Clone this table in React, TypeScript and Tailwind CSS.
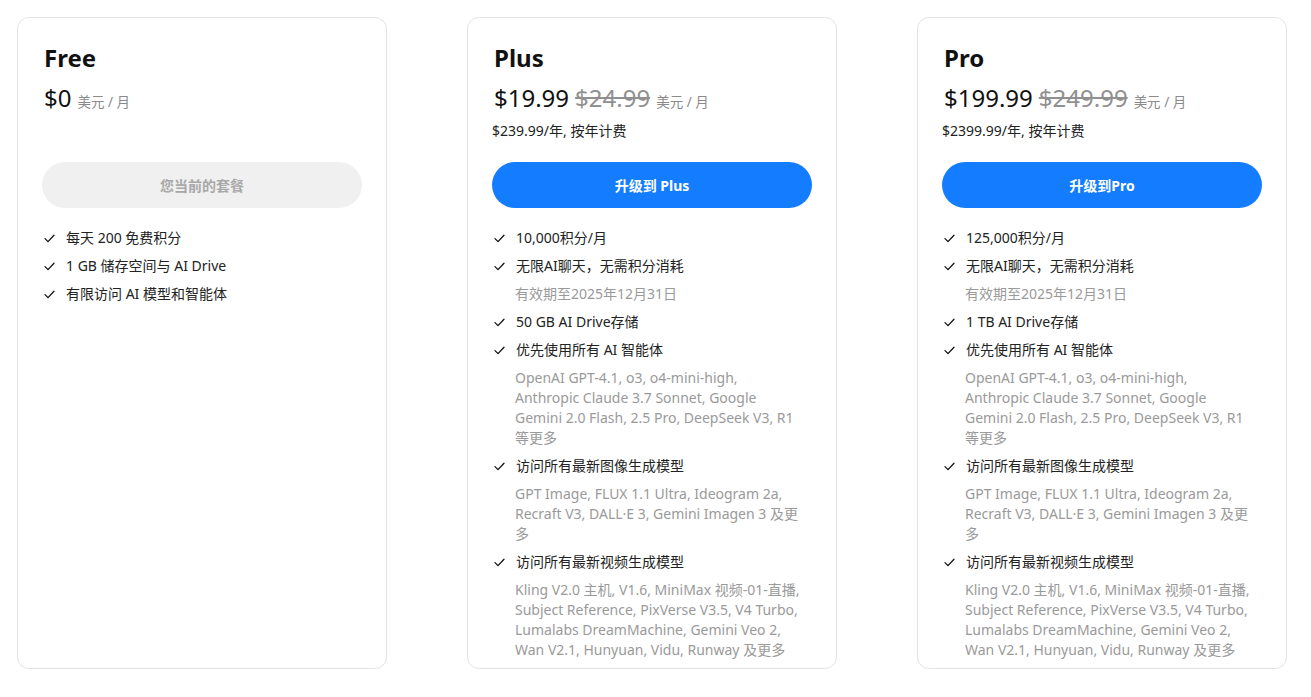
import React from 'react';

type Feature = { text: string | string[]; sub?: boolean };

type Plan = {
  name: string;
  price: string;
  oldPrice?: string;
  annual?: string;
  button: string;
  current?: boolean;
  features: Feature[];
};

const agentModels = [
  'OpenAI GPT-4.1, o3, o4-mini-high,',
  'Anthropic Claude 3.7 Sonnet, Google',
  'Gemini 2.0 Flash, 2.5 Pro, DeepSeek V3, R1',
  '等更多',
];
const imageModels = 'GPT Image, FLUX 1.1 Ultra, Ideogram 2a, Recraft V3, DALL·E 3, Gemini Imagen 3 及更多';
const videoModels =
  'Kling V2.0 主机, V1.6, MiniMax 视频-01-直播, Subject Reference, PixVerse V3.5, V4 Turbo, Lumalabs DreamMachine, Gemini Veo 2, Wan V2.1, Hunyuan, Vidu, Runway 及更多';

const plans: Plan[] = [
  {
    name: 'Free',
    price: '$0',
    button: '您当前的套餐',
    current: true,
    features: [
      { text: '每天 200 免费积分' },
      { text: '1 GB 储存空间与 AI Drive' },
      { text: '有限访问 AI 模型和智能体' },
    ],
  },
  {
    name: 'Plus',
    price: '$19.99',
    oldPrice: '$24.99',
    annual: '$239.99/年, 按年计费',
    button: '升级到 Plus',
    features: [
      { text: '10,000积分/月' },
      { text: '无限AI聊天，无需积分消耗' },
      { text: '有效期至2025年12月31日', sub: true },
      { text: '50 GB AI Drive存储' },
      { text: '优先使用所有 AI 智能体' },
      { text: agentModels, sub: true },
      { text: '访问所有最新图像生成模型' },
      { text: imageModels, sub: true },
      { text: '访问所有最新视频生成模型' },
      { text: videoModels, sub: true },
    ],
  },
  {
    name: 'Pro',
    price: '$199.99',
    oldPrice: '$249.99',
    annual: '$2399.99/年, 按年计费',
    button: '升级到Pro',
    features: [
      { text: '125,000积分/月' },
      { text: '无限AI聊天，无需积分消耗' },
      { text: '有效期至2025年12月31日', sub: true },
      { text: '1 TB AI Drive存储' },
      { text: '优先使用所有 AI 智能体' },
      { text: agentModels, sub: true },
      { text: '访问所有最新图像生成模型' },
      { text: imageModels, sub: true },
      { text: '访问所有最新视频生成模型' },
      { text: videoModels, sub: true },
    ],
  },
];

const CheckIcon = () => (
  <svg width="11" height="9" viewBox="0 0 11 9" fill="none" className="shrink-0">
    <path d="M1 4.6 L4 7.6 L10 1.2" stroke="#111" strokeWidth="1.3" strokeLinecap="round" strokeLinejoin="round" />
  </svg>
);

const PlanCard: React.FC<{ plan: Plan }> = ({ plan }) => {
  return (
    <div className="h-[652px] w-[370px] shrink-0 overflow-hidden rounded-xl border border-[#e3e3e3] bg-white p-6">
      <h2 className="pl-0.5 text-[24px] leading-8 font-bold text-[#111]">{plan.name}</h2>
      <div className="mt-2 flex h-8 items-baseline gap-[6px] pl-0.5 leading-8">
        <span className="text-[24px] text-[#111]">{plan.price}</span>
        {plan.oldPrice && (
          <span className="text-[24px] text-[#909090] line-through decoration-[1.5px]">{plan.oldPrice}</span>
        )}
        <span className="text-[13.5px] text-[#8a8a8a]">美元 / 月</span>
      </div>
      <div className="mt-[7px] h-5 text-[14px] leading-5 text-[#222]">{plan.annual}</div>
      {plan.current ? (
        <button className="mt-[21px] h-[46px] w-full rounded-full bg-[#f0f0f0] text-[14px] font-bold text-[#a8a8a8]">
          {plan.button}
        </button>
      ) : (
        <button className="mt-[21px] h-[46px] w-full rounded-full bg-[#147dff] text-[14px] font-bold text-white">
          {plan.button}
        </button>
      )}
      <ul className="mt-5 flex flex-col gap-2 px-0.5">
        {plan.features.map((f, i) =>
          f.sub ? (
            <li key={i} className="pl-[21px] pr-2 text-[14px] leading-5 text-[#9a9a9a]">
              {Array.isArray(f.text)
                ? f.text.map((line) => (
                    <span key={line} className="block">
                      {line}
                    </span>
                  ))
                : f.text}
            </li>
          ) : (
            <li key={i} className="flex items-center gap-[11px] text-[14px] leading-5 text-[#222]">
              <CheckIcon />
              <span>{f.text}</span>
            </li>
          ),
        )}
      </ul>
    </div>
  );
};

export default function App() {
  return (
    <div
      className="min-h-screen bg-white"
      style={{ fontFamily: '"Noto Sans", "Noto Sans CJK SC", sans-serif' }}
    >
      <div className="flex gap-20 pl-[17px] pt-[17px]">
        {plans.map((p) => (
          <PlanCard key={p.name} plan={p} />
        ))}
      </div>
    </div>
  );
}
